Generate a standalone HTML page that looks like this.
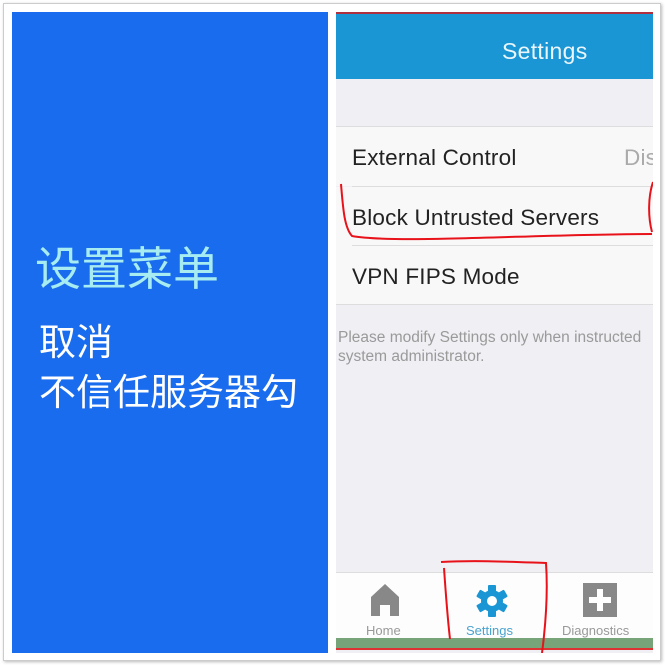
<!DOCTYPE html>
<html><head><meta charset="utf-8"><style>
*{margin:0;padding:0;box-sizing:border-box}
body{width:665px;height:665px;background:#fff;position:relative;overflow:hidden;font-family:"Liberation Sans","Noto Sans CJK SC",sans-serif}
.frame{position:absolute;left:3px;top:3px;width:658px;height:658px;border:1px solid #ccc;box-shadow:1px 1px 3px #bbb}
.blue{position:absolute;left:12px;top:12px;width:316px;height:641px;background:#1a6cee}
.t1{position:absolute;left:35px;top:236px;font-size:46px;color:#a6ecf0;font-family:"Noto Sans CJK SC",sans-serif;line-height:60px;white-space:nowrap}
.t2{position:absolute;left:39px;top:314px;font-size:37px;color:#fff;font-family:"Noto Sans CJK SC",sans-serif;line-height:50px;white-space:nowrap}
.ph{position:absolute;left:336px;top:12px;width:317px;height:641px;background:#efeff4;overflow:hidden}
.hdr{position:absolute;left:0;top:0;width:317px;height:67px;background:#1a96d4;border-top:2px solid #b03040}
.hdr span{position:absolute;left:166px;top:24px;color:#eaf6fc;font-size:23px;letter-spacing:0.3px}
.row{position:absolute;left:0;width:317px;height:59px;background:#f8f8f8;font-size:22.5px;color:#222;padding:18px 0 0 16px;white-space:nowrap;letter-spacing:0.2px}
.line{position:absolute;left:0;width:317px;height:1px;background:#ddd}
.note{position:absolute;left:2px;top:316px;font-size:15.5px;color:#9a9a9a;line-height:19px;white-space:nowrap}
.tab{position:absolute;left:0;top:560px;width:317px;height:67px;background:#fdfdfd;border-top:1px solid #ddd}
.green{position:absolute;left:0;top:626px;width:317px;height:12px;background:#78a47a;border-bottom:2px solid #d33}
.lbl{position:absolute;top:50px;font-size:13px;color:#999}
</style></head><body>
<div class="frame"></div>
<div class="blue"></div>
<div class="t1">设置菜单</div>
<div class="t2">取消<br>不信任服务器勾</div>
<div class="ph">
 <div class="hdr"><span>Settings</span></div>
 <div class="line" style="top:114px"></div>
 <div class="row" style="top:115px">External Control<span style="position:absolute;left:288px;color:#aaa">Dis</span></div>
 <div class="line" style="top:174px;left:16px"></div>
 <div class="row" style="top:175px">Block Untrusted Servers</div>
 <div class="line" style="top:233px;left:16px"></div>
 <div class="row" style="top:234px">VPN FIPS Mode</div>
 <div class="line" style="top:292px"></div>
 <div class="note">Please modify Settings only when instructed<br>system administrator.</div>
 <div class="tab">
  <svg style="position:absolute;left:34px;top:10px" width="30" height="34" viewBox="0 0 30 34"><path d="M15 1 L29 14 L29 33 L20 33 L20 22 L10 22 L10 33 L1 33 L1 14 Z" fill="#888"/></svg>
  <div class="lbl" style="left:30px">Home</div>
  <svg style="position:absolute;left:139px;top:11px" width="34" height="34" viewBox="-17 -17 34 34"><g fill="#1a96d4"><circle r="11"/><rect x="-4" y="-16" width="8" height="32" rx="1"/><rect x="-4" y="-16" width="8" height="32" rx="1" transform="rotate(60)"/><rect x="-4" y="-16" width="8" height="32" rx="1" transform="rotate(120)"/></g><circle r="5" fill="#fff"/></svg>
  <div class="lbl" style="left:130px;color:#4aa3cf">Settings</div>
  <div style="position:absolute;left:247px;top:10px;width:34px;height:34px;background:#888"></div>
  <div style="position:absolute;left:261px;top:16px;width:6px;height:22px;background:#fff"></div>
  <div style="position:absolute;left:253px;top:24px;width:22px;height:6px;background:#fff"></div>
  <div class="lbl" style="left:226px">Diagnostics</div>
 </div>
 <div class="green"></div>
 <svg style="position:absolute;left:0;top:0" width="317" height="641"><g fill="none" stroke="#e8121a" stroke-width="2"><path d="M5 172 C7 195 8 215 16 224 C60 232 200 222 316 222"/><path d="M317 170 C312 185 312 205 316 220"/><path d="M105 550 C140 548 180 550 210 551 C212 580 210 610 206 641"/><path d="M108 556 C110 585 112 610 114 627"/></g></svg>
</div>
</body></html>
